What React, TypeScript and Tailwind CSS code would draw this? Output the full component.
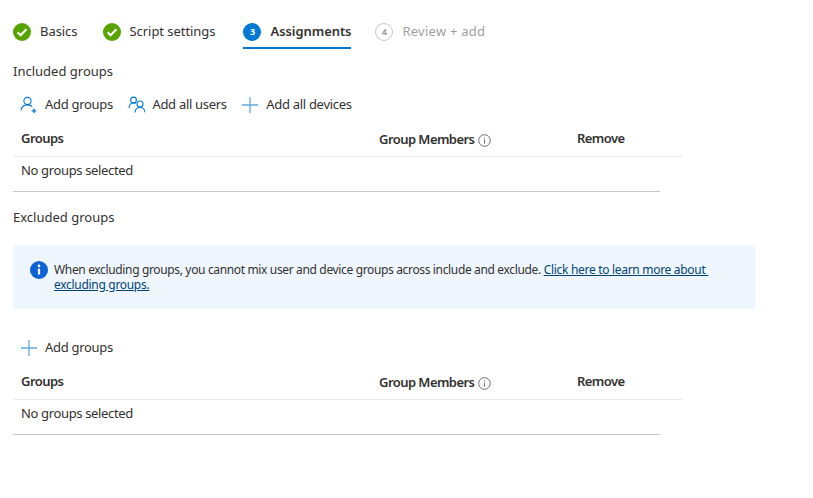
const PersonAddIcon = () => (
  <svg width="18" height="18" viewBox="0 0 18 18" fill="none" stroke="#0078d4" strokeWidth="1.1">
    <circle cx="7.5" cy="5" r="3.6" />
    <path d="M1 14.5c.4-3.4 2.8-5.6 6.5-5.6 2 0 3.6.7 4.7 1.8" />
    <path d="M14 12.5v4.6M11.7 14.8h4.6" strokeWidth="1.3" />
  </svg>
)

const UsersIcon = () => (
  <svg width="18" height="18" viewBox="-1.5 0 18 18" fill="none" stroke="#0078d4" strokeWidth="1.1">
    <circle cx="5" cy="4" r="2.9" />
    <path d="M.6 12c.2-3 2-5 4.4-5 .8 0 1.5.2 2.1.6" />
    <circle cx="11.5" cy="8" r="3" />
    <path d="M6.5 16.5c.2-3 2.3-5 5-5s4.8 2 5 5" />
  </svg>
)

const PlusIcon = () => (
  <svg width="16" height="16" viewBox="0 0 16 16" stroke="#5ea9e2" strokeWidth="1.3" className="mb-px">
    <path d="M8 0v16M0 8h16" />
  </svg>
)

const CheckCircle = () => (
  <svg width="18" height="18" viewBox="0 0 18 18">
    <circle cx="9" cy="9" r="9" fill="#57a300" />
    <path d="M4.6 9.3l3 3 5.8-6" fill="none" stroke="#fff" strokeWidth="2" />
  </svg>
)

const SmallInfo = () => (
  <svg width="13" height="13" viewBox="0 0 13 13" fill="none" stroke="#605e5c" strokeWidth="0.9" className="ml-1">
    <circle cx="6.5" cy="6.5" r="5.8" />
    <path d="M6.5 5.6v4M6.5 3.3v1.1" />
  </svg>
)

const BannerInfo = () => (
  <svg width="18" height="18" viewBox="0 0 18 18" className="shrink-0 mb-[15px]">
    <circle cx="9" cy="9" r="9" fill="#0f62d6" />
    <path d="M9 7.6v6" stroke="#fff" strokeWidth="2.2" />
    <circle cx="9" cy="4.9" r="1.3" fill="#fff" />
  </svg>
)

const DoneStep = ({ label }: { label: string }) => (
  <div className="flex items-center gap-[9px] h-[31px] tracking-[-0.05px]">
    <CheckCircle />
    <span>{label}</span>
  </div>
)

const Action = ({ icon, label }: { icon: React.ReactNode; label: string }) => (
  <div className="flex items-center gap-[7px]">
    <span className="w-[18px] flex justify-center">{icon}</span>
    <span>{label}</span>
  </div>
)

const GroupTable = () => (
  <div>
    <div className="w-[670px] h-[35px] flex items-center pl-2 font-semibold tracking-[-0.55px] border-b border-[#edebe9]">
      <span className="w-[358px]">Groups</span>
      <span className="w-[198px] flex items-center pt-[2px]">
        Group Members
        <SmallInfo />
      </span>
      <span>Remove</span>
    </div>
    <div className="w-[647px] h-[35px] flex items-center pl-2 pb-[6px] tracking-[-0.35px] border-b border-[#c8c6c4]">No groups selected</div>
  </div>
)

export default function App() {
  return (
    <div className="min-h-[498px] bg-white px-[13px] pt-[16px] text-[13px] text-[#323130] font-['Noto_Sans','Open_Sans',sans-serif]">
      <div className="flex items-start h-[33px]">
        <DoneStep label="Basics" />
        <div className="w-[25px]" />
        <DoneStep label="Script settings" />
        <div className="w-[28px]" />
        <div className="flex items-center gap-[9px] h-[33px] border-b-2 border-[#0078d4] font-semibold tracking-[-0.07px]">
          <span className="w-[18px] h-[18px] rounded-full bg-[#0078d4] text-white text-[9px] font-bold flex items-center justify-center">3</span>
          <span>Assignments</span>
        </div>
        <div className="w-[24px]" />
        <div className="flex items-center gap-[9px] h-[31px] text-[#a19f9d] tracking-[0.25px]">
          <span className="w-[18px] h-[18px] rounded-full border border-[#c8c6c4] text-[9px] font-bold flex items-center justify-center">4</span>
          <span>Review + add</span>
        </div>
      </div>

      <div className="mt-[13px] h-[20px] flex items-center">Included groups</div>
      <div className="mt-[13px] h-[20px] pl-[7px] flex items-center gap-[14.5px] tracking-[-0.3px]">
        <Action icon={<PersonAddIcon />} label="Add groups" />
        <Action icon={<UsersIcon />} label="Add all users" />
        <Action icon={<PlusIcon />} label="Add all devices" />
      </div>
      <div className="mt-[7px]">
        <GroupTable />
      </div>

      <div className="mt-[16px] h-[20px] flex items-center">Excluded groups</div>

      <div className="mt-[17px] w-[742px] h-[64px] rounded-[2px] bg-[#eff6fe] pl-[17px] flex items-center gap-[6px]">
        <BannerInfo />
        <div className="leading-[15px] text-[12px] tracking-[-0.35px]">
          <p className="whitespace-nowrap">
            When excluding groups, you cannot mix user and device groups across include and exclude.{" "}
            <a className="text-[#004578] underline tracking-[-0.3px]">Click here to learn more about&nbsp;</a>
          </p>
          <p>
            <a className="text-[#004578] underline tracking-[-0.3px]">excluding groups.</a>
          </p>
        </div>
      </div>

      <div className="mt-[29px] h-[20px] pl-[7px] flex items-center tracking-[-0.3px]">
        <Action icon={<PlusIcon />} label="Add groups" />
      </div>
      <div className="mt-[7px]">
        <GroupTable />
      </div>
    </div>
  )
}
